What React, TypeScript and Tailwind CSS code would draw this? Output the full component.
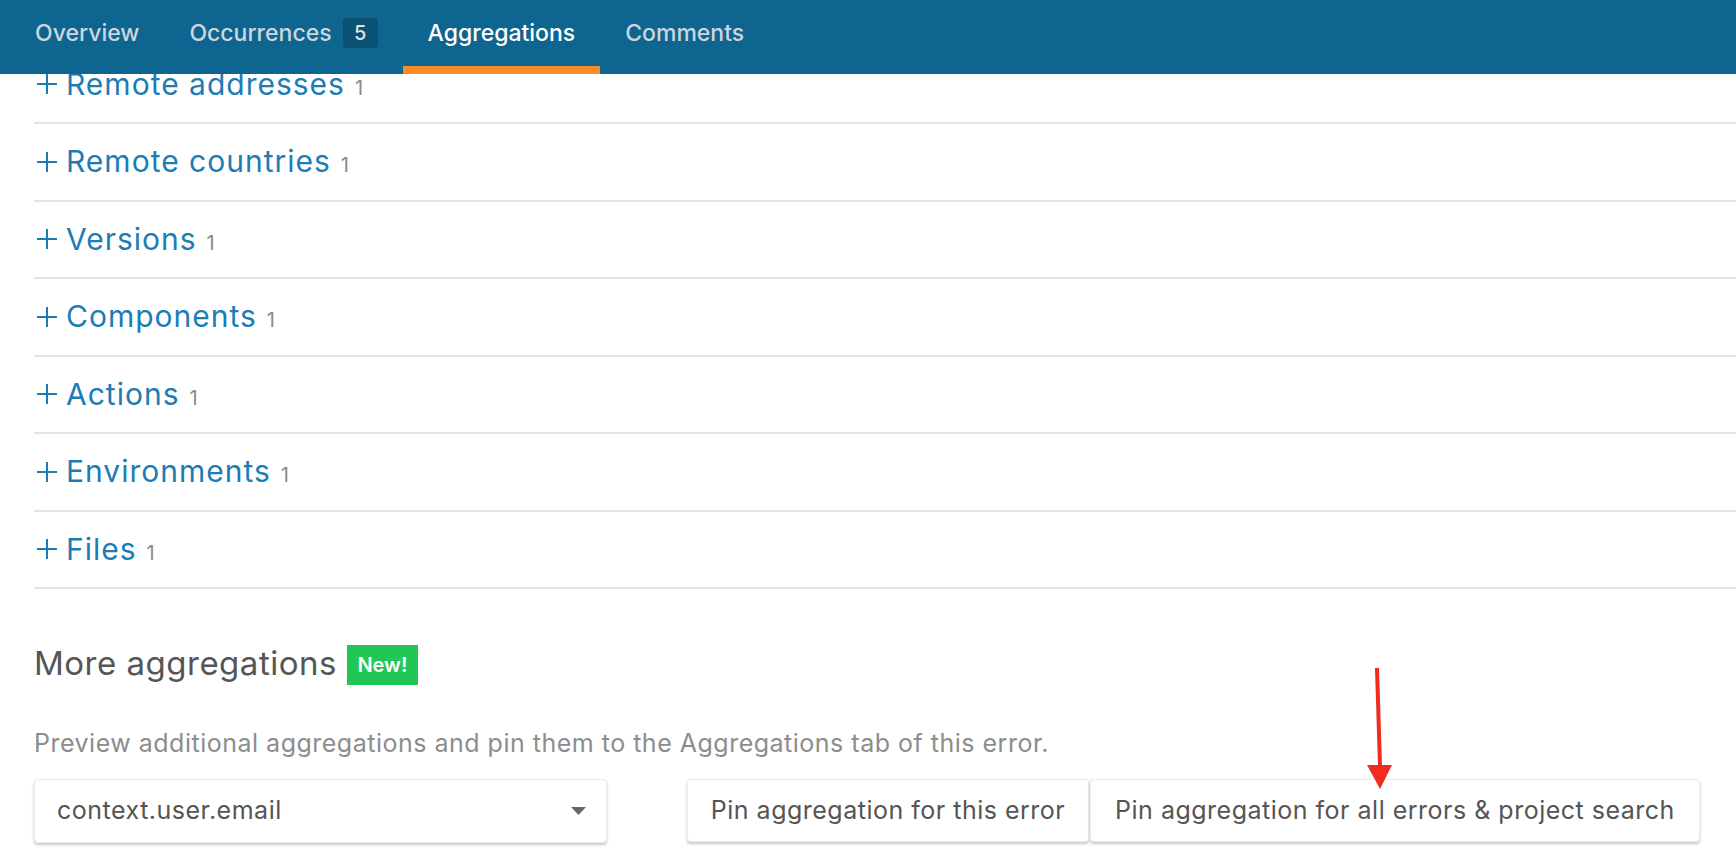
import React from "react"

const rows = [
  "Remote addresses",
  "Remote countries",
  "Versions",
  "Components",
  "Actions",
  "Environments",
  "Files",
]

function Plus() {
  return (
    <svg width="20" height="20" viewBox="0 0 20 20" className="shrink-0">
      <path d="M10 0v20M0 10h20" stroke="#1c7cb5" strokeWidth="2" fill="none" />
    </svg>
  )
}

export default function App() {
  return (
    <div
      className="relative w-[1736px] h-[864px] overflow-hidden bg-white"
      style={{ fontFamily: "Inter, 'Liberation Sans', sans-serif" }}
    >
      {/* tabs bar */}
      <div className="relative z-10 flex h-[74px] bg-[#0e6590] pl-[10px]">
        <div className="flex items-center px-[25px] pb-[8px] text-[23px] font-medium text-[#cdd6dc]">
          Overview
        </div>
        <div className="flex items-center px-[25px] pb-[8px] text-[23px] font-medium text-[#cdd6dc]">
          Occurrences
          <span className="ml-[11px] flex h-[30px] w-[35px] items-center justify-center rounded-[4px] bg-[#0a5174] text-[20px] text-[#dde4e8]">
            5
          </span>
        </div>
        <div className="relative flex items-center px-[25px] pb-[8px] text-[23px] font-medium text-white">
          Aggregations
          <div className="absolute bottom-0 left-0 right-0 h-[8px] bg-[#fa8a24]" />
        </div>
        <div className="flex items-center px-[25px] pb-[8px] text-[23px] font-medium text-[#cdd6dc]">
          Comments
        </div>
      </div>

      {/* aggregation list, scrolled under the bar */}
      <div className="-mt-[27.5px] pl-[34px]">
        {rows.map((r) => (
          <div
            key={r}
            className="flex h-[77.5px] items-center border-b-2 border-[#e4e4e4]"
          >
            <div className="ml-[3px]">
              <Plus />
            </div>
            <div className="ml-[9px] flex items-baseline">
              <span className="text-[30px] tracking-[1px] text-[#1c7cb5]">{r}</span>
              <span className="ml-[10px] text-[20px] text-[#8a8a8a]">1</span>
            </div>
          </div>
        ))}
      </div>

      {/* more aggregations */}
      <div className="pl-[34px]">
        <div className="mt-[52px] flex items-center">
          <h2 className="text-[33px] leading-[40px] tracking-[0.5px] text-[#555555]">
            More aggregations
          </h2>
          <span className="ml-[10px] mt-[4px] flex h-[40px] w-[71px] items-center justify-center bg-[#22c655] text-[20px] font-semibold text-white">
            New!
          </span>
        </div>
        <p className="mt-[43px] text-[25px] leading-[30px] tracking-[0.5px] text-[#8d8d8d]">
          Preview additional aggregations and pin them to the Aggregations tab of this error.
        </p>
        <div className="mt-[21px] flex">
          <div className="flex h-[64px] w-[573px] items-center justify-between rounded-[4px] border border-[#ececec] bg-white pl-[22px] pr-[20px] text-[25px] tracking-[0.5px] text-[#555555] shadow-[0_2px_3px_rgba(0,0,0,0.22)]">
            <span>context.user.email</span>
            <svg width="15" height="8" viewBox="0 0 15 8">
              <path d="M0 0h15L7.5 8z" fill="#666666" />
            </svg>
          </div>
          <div className="ml-[80px] flex gap-[1px]">
            <button className="h-[63px] w-[402px] rounded-[4px] border border-[#ececec] bg-white text-[25px] tracking-[0.5px] text-[#555555] shadow-[0_2px_3px_rgba(0,0,0,0.22)]">
              Pin aggregation for this error
            </button>
            <button className="h-[63px] w-[610px] rounded-[4px] border border-[#ececec] bg-white text-[25px] tracking-[0.5px] text-[#555555] shadow-[0_2px_3px_rgba(0,0,0,0.22)]">
              Pin aggregation for all errors &amp; project search
            </button>
          </div>
        </div>
      </div>

      {/* annotation arrow */}
      <svg
        className="absolute left-[1360px] top-[660px]"
        width="40"
        height="135"
        viewBox="0 0 40 135"
      >
        <path d="M17 8L20 106" stroke="#f22a1f" strokeWidth="4" fill="none" />
        <path d="M7 105h25l-12 24z" fill="#f22a1f" />
      </svg>
    </div>
  )
}
